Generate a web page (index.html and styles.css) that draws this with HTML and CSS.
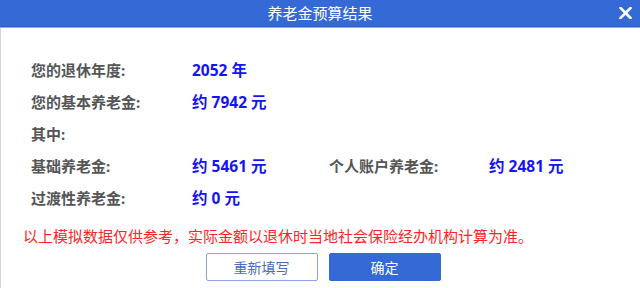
FILE: index.html
```html
<!DOCTYPE html>
<html>
<head>
    <meta charset="utf-8">
    <title>养老金预算结果</title>
    <link rel="stylesheet" href="styles.css">
</head>
<body>
    <div class="dialog">
        <div class="topbar">
            <h1>养老金预算结果</h1>
            <svg class="close" width="13" height="12" viewBox="0 0 13 12">
                <path d="M1.5 1 L11.5 11 M11.5 1 L1.5 11" stroke="#fff" stroke-width="2.6" stroke-linecap="square"/>
            </svg>
        </div>
        <div class="content">
            <div class="result">
                <div class="label">您的退休年度:</div>
                <div class="value wide">2052 年</div>

                <div class="label">您的基本养老金:</div>
                <div class="value wide">约 7942 元</div>

                <div class="label full">其中:</div>

                <div class="label">基础养老金:</div>
                <div class="value">约 5461 元</div>
                <div class="label">个人账户养老金:</div>
                <div class="value">约 2481 元</div>

                <div class="label">过渡性养老金:</div>
                <div class="value wide">约 0 元</div>
            </div>
            <p class="note">以上模拟数据仅供参考，实际金额以退休时当地社会保险经办机构计算为准。</p>
            <div class="buttons">
                <button class="btn btn-reset">重新填写</button>
                <button class="btn btn-ok">确定</button>
            </div>
        </div>
    </div>
</body>
</html>
```

FILE: styles.css
```css
html {
    font-family: "Noto Sans", "Noto Sans CJK SC", sans-serif;
}

body {
    margin: 0;
    background: #fff;
}

.dialog {
    width: 640px;
    height: 288px;
    overflow: hidden;
}

.topbar {
    position: relative;
    height: 26px;
    background-color: #3569d5;
    border-bottom: 1px solid #2b5cc4;
    box-shadow: 0 1px 0 #8eaee9;
}

.topbar h1 {
    margin: 0;
    font-size: 15px;
    font-weight: normal;
    line-height: 26px;
    color: #fff;
    text-align: center;
}

.close {
    position: absolute;
    right: 8px;
    top: 7px;
}

.content {
    border-left: 1px solid #d4d4d4;
    margin-top: 1px;
    height: 260px;
    padding: 25px 0 0 30px;
    box-sizing: border-box;
}

.result {
    display: grid;
    grid-template-columns: 161px 137px 160px 1fr;
    grid-auto-rows: 32px;
    align-items: center;
    font-size: 15px;
    font-weight: bold;
}

.label {
    color: #555;
}

.value {
    font-size: 15.5px;
    color: #1414f5;
}

.wide {
    grid-column: 2 / -1;
}

.full {
    grid-column: 1 / -1;
}

.note {
    margin: 11px 0 0 -8px;
    font-size: 15px;
    line-height: 24px;
    color: #ff2424;
}

.buttons {
    display: flex;
    justify-content: center;
    gap: 11px;
    margin: 5px 0 0 -25px;
}

.btn {
    width: 112px;
    height: 28px;
    font-family: "Noto Sans CJK SC", sans-serif;
    font-size: 14px;
    border-radius: 2px;
    box-sizing: border-box;
    padding: 0;
}

.btn-reset {
    background: #fff;
    border: 1px solid #86a5e6;
    color: #4a6cc0;
}

.btn-ok {
    background: #3569d5;
    border: 1px solid #3569d5;
    color: #fff;
}
```
